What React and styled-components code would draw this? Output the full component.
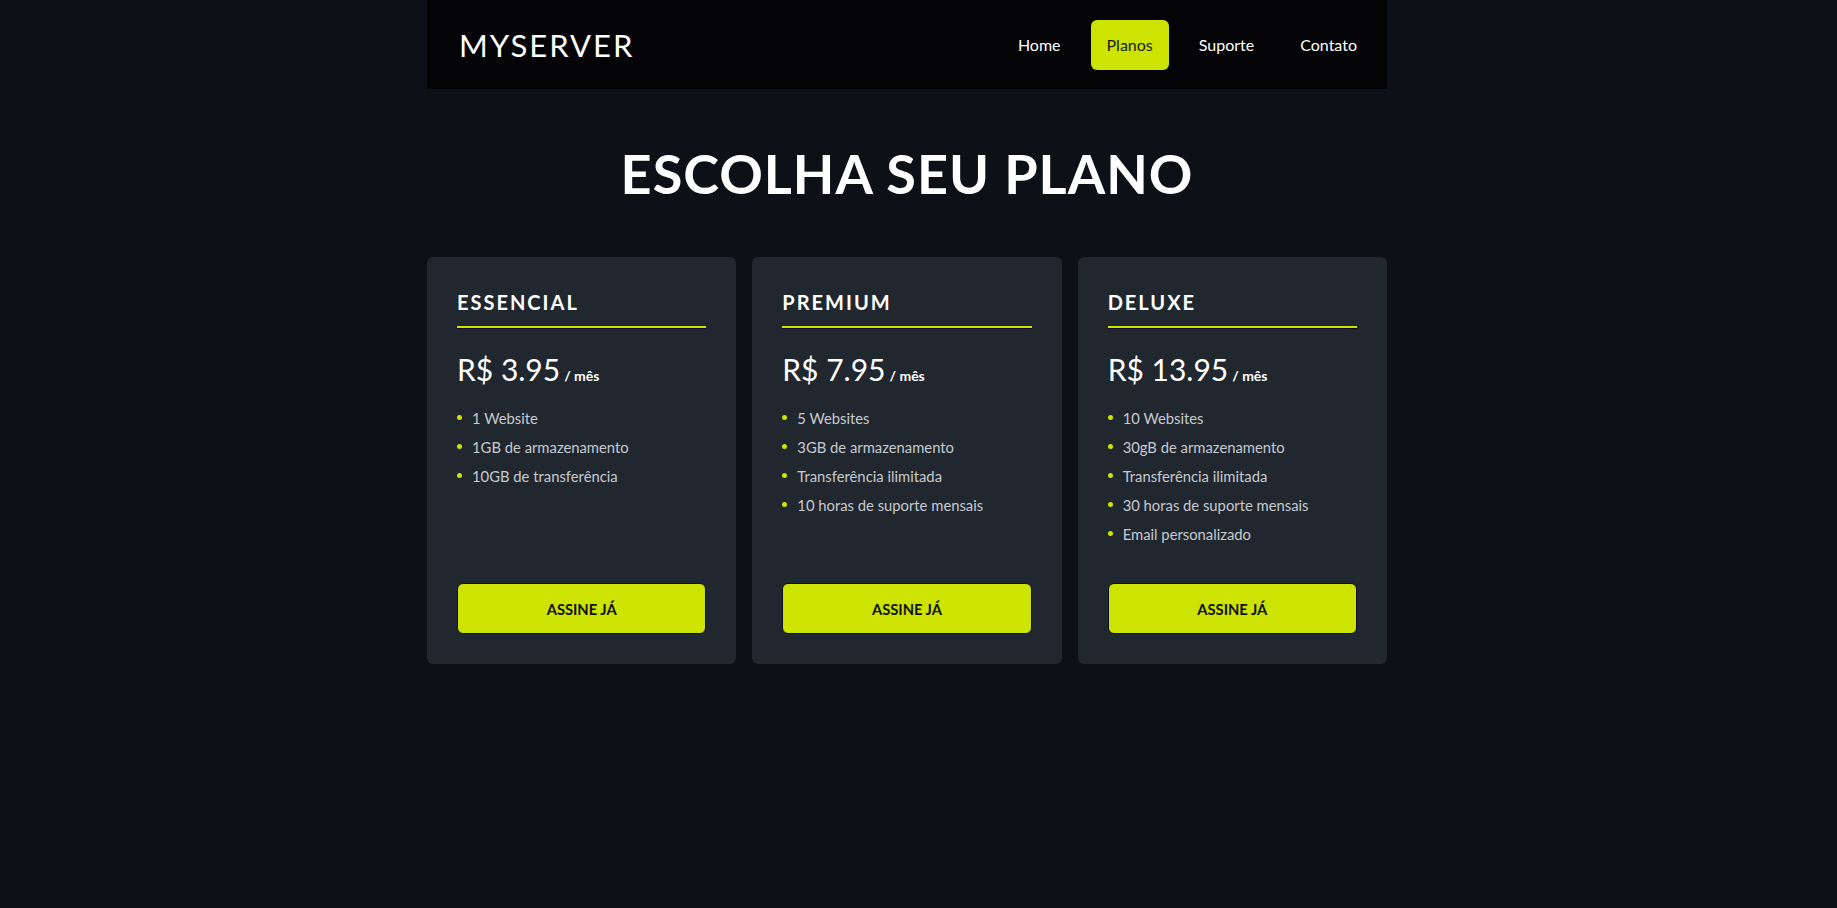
import React from "react";
import styled, { createGlobalStyle } from "styled-components";

const GlobalStyle = createGlobalStyle`
  html, body {
    margin: 0;
    padding: 0;
    background: #0d1117;
    font-family: Lato, "Open Sans", sans-serif;
    color: #ffffff;
  }
  * { box-sizing: border-box; }
`;

const accent = "#cde300";

const Outer = styled.div`
  min-height: 908px;
  display: flex;
  justify-content: center;
  padding-right: 23px;
`;

const Page = styled.div`
  width: 960px;
  display: flex;
  flex-direction: column;
`;

const Header = styled.header`
  height: 89px;
  background: #040406;
  display: flex;
  align-items: center;
  justify-content: space-between;
  padding: 0 14px 0 32px;
`;

const Logo = styled.div`
  font-size: 31px;
  letter-spacing: 2px;
  font-weight: 400;
  color: #fff;
`;

const Nav = styled.nav`
  display: flex;
  gap: 14px;
  align-items: center;
`;

const NavLink = styled.a`
  height: 50px;
  display: flex;
  align-items: center;
  padding: 0 16px;
  border-radius: 6px;
  font-size: 16px;
  text-decoration: none;
  color: ${(p) => (p.$active ? "#1a1a1a" : "#ffffff")};
  background: ${(p) => (p.$active ? accent : "transparent")};
`;

const Title = styled.h1`
  margin: 50px 0 48px;
  text-align: center;
  font-size: 54px;
  font-weight: 700;
  letter-spacing: 1px;
  line-height: 70px;
`;

const Grid = styled.div`
  display: grid;
  grid-template-columns: repeat(3, 1fr);
  gap: 16px;
`;

const Card = styled.div`
  background: #21272e;
  border-radius: 6px;
  padding: 30px;
  display: flex;
  flex-direction: column;
`;

const PlanName = styled.h2`
  margin: 0;
  padding: 3px 0 12px;
  font-size: 20px;
  font-weight: 700;
  letter-spacing: 2px;
  border-bottom: 2px solid ${accent};
  box-shadow: 0 1px 0 #0b0d2a;
`;

const Price = styled.div`
  margin-top: 23px;
  font-size: 30px;
  display: flex;
  align-items: baseline;
  gap: 4px;
`;

const Per = styled.span`
  font-size: 14px;
  font-weight: 700;
`;

const List = styled.ul`
  list-style: none;
  margin: 16px 0 35px;
  padding: 0;
  display: flex;
  flex-direction: column;
`;

const Item = styled.li`
  height: 29px;
  display: flex;
  align-items: center;
  gap: 10px;
  font-size: 14.8px;
  color: #c6cad0;
  &::before {
    content: "";
    width: 5px;
    height: 5px;
    border-radius: 50%;
    background: ${accent};
  }
`;

const Button = styled.button`
  margin-top: auto;
  height: 51px;
  width: 100%;
  background: ${accent};
  border: 1px solid #0b0d2a;
  border-radius: 6px;
  font-family: inherit;
  font-size: 14.7px;
  font-weight: 700;
  color: #111;
  cursor: pointer;
`;

const plans = [
  { name: "Essencial", price: "R$ 3.95", items: ["1 Website", "1GB de armazenamento", "10GB de transferência"] },
  {
    name: "Premium",
    price: "R$ 7.95",
    items: ["5 Websites", "3GB de armazenamento", "Transferência ilimitada", "10 horas de suporte mensais"],
  },
  {
    name: "Deluxe",
    price: "R$ 13.95",
    items: [
      "10 Websites",
      "30gB de armazenamento",
      "Transferência ilimitada",
      "30 horas de suporte mensais",
      "Email personalizado",
    ],
  },
];

export default function App() {
  return (
    <>
      <GlobalStyle />
      <Outer>
        <Page>
          <Header>
            <Logo>MYSERVER</Logo>
            <Nav>
              <NavLink href="#">Home</NavLink>
              <NavLink href="#" $active>Planos</NavLink>
              <NavLink href="#">Suporte</NavLink>
              <NavLink href="#">Contato</NavLink>
            </Nav>
          </Header>
          <Title>ESCOLHA SEU PLANO</Title>
          <Grid>
            {plans.map((p) => (
              <Card key={p.name}>
                <PlanName>{p.name.toUpperCase()}</PlanName>
                <Price>
                  {p.price}
                  <Per>/ mês</Per>
                </Price>
                <List>
                  {p.items.map((it) => (
                    <Item key={it}>{it}</Item>
                  ))}
                </List>
                <Button>ASSINE JÁ</Button>
              </Card>
            ))}
          </Grid>
        </Page>
      </Outer>
    </>
  );
}
